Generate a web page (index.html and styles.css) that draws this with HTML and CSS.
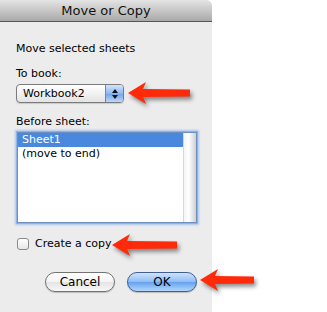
FILE: index.html
```html
<!DOCTYPE html>
<html lang="en">
<head>
    <meta charset="UTF-8">
    <title>Move or Copy</title>
    <link rel="stylesheet" href="styles.css">
</head>
<body>
    <div class="dialog">
        <div class="titlebar">Move or Copy</div>
        <div class="content">
            <p class="intro">Move selected sheets</p>

            <p class="label">To book:</p>
            <div class="popup">
                <span class="popup-text">Workbook2</span>
                <span class="stepper">
                    <svg width="8" height="12" viewBox="0 0 8 12">
                        <polygon points="4,1 7,5 1,5" fill="#111"/>
                        <polygon points="1,7 7,7 4,11" fill="#111"/>
                    </svg>
                </span>
            </div>

            <p class="label label-list">Before sheet:</p>
            <div class="listbox">
                <div class="rows">
                    <div class="row selected">Sheet1</div>
                    <div class="row">(move to end)</div>
                </div>
                <div class="scrolltrack"></div>
            </div>

            <label class="check-row">
                <span class="checkbox"></span>
                <span>Create a copy</span>
            </label>

            <div class="buttons">
                <button class="btn">Cancel</button>
                <button class="btn btn-default">OK</button>
            </div>
        </div>
    </div>

    <!-- red call-out arrows -->
    <svg class="arrow arrow-book" width="64" height="26" viewBox="0 0 64 26">
        <polygon points="0,13 18,2 15,9 62,9.5 62,16.5 15,17 18,24" fill="#ff2a0a"/>
    </svg>
    <svg class="arrow arrow-copy" width="67" height="26" viewBox="0 0 67 26">
        <polygon points="0,13 18,2 15,9 65,9.5 65,16.5 15,17 18,24" fill="#ff2a0a"/>
    </svg>
    <svg class="arrow arrow-ok" width="56" height="26" viewBox="0 0 56 26">
        <polygon points="0,13 18,2 15,9 54,9.5 54,16.5 15,17 18,24" fill="#ff2a0a"/>
    </svg>
</body>
</html>
```

FILE: styles.css
```css
/* Basic Reset */
* {
    margin: 0;
    padding: 0;
    box-sizing: border-box;
}

body {
    font-family: "DejaVu Sans", "Liberation Sans", sans-serif;
    font-size: 11px;
    color: #000;
    background-color: #fff;
    width: 327px;
    height: 312px;
    overflow: hidden;
    position: relative;
}

.dialog {
    width: 212px;
    height: 312px;
    background-color: #ececec;
    border-top-right-radius: 6px;
    overflow: hidden;
}

.titlebar {
    height: 22px;
    line-height: 21px;
    text-align: center;
    font-size: 13px;
    color: #111;
    background: linear-gradient(#e4e4e4, #a9a9a9);
    border-bottom: 1px solid #555;
}

.content {
    padding: 20px 0 0 16px;
}

.intro,
.label {
    line-height: 14px;
}

.label {
    margin-top: 11px;
}

.label-list {
    margin-top: 12px;
}

/* pop-up menu */
.popup {
    margin-top: 3px;
    width: 108px;
    height: 19px;
    display: flex;
    border: 1px solid #7b7b7b;
    border-radius: 4px;
    background: linear-gradient(#ffffff, #f1f1f1 50%, #e3e3e3);
    box-shadow: 0 1px 1px rgba(0, 0, 0, 0.15);
    overflow: hidden;
}

.popup-text {
    flex: 1;
    line-height: 17px;
    padding-left: 6px;
}

.stepper {
    width: 18px;
    display: flex;
    align-items: center;
    justify-content: center;
    border-left: 1px solid #6f87ad;
    background: linear-gradient(#d3e5fb, #8fb8ee 50%, #6fa3ea 51%, #bcd8fb);
}

/* list */
.listbox {
    margin-top: 3px;
    margin-left: 1px;
    width: 180px;
    height: 91px;
    display: flex;
    background-color: #fff;
    border: 1px solid #6d8fc2;
    box-shadow: 0 0 0 1px #8fb3e6, 0 0 2px 2px #a9c6ee;
}

.rows {
    flex: 1;
}

.row {
    height: 14px;
    line-height: 14px;
    padding-left: 4px;
}

.row.selected {
    background-color: #4a88dd;
    color: #fff;
}

.scrolltrack {
    width: 13px;
    background: linear-gradient(to right, #f4f4f4, #ffffff 40%, #cfcfcf);
    border-left: 1px solid #d8d8d8;
}

/* checkbox */
.check-row {
    margin-top: 14px;
    display: flex;
    align-items: center;
    gap: 6px;
    line-height: 14px;
}

.checkbox {
    width: 12px;
    height: 12px;
    margin-left: 1px;
    border: 1px solid #8a8a8a;
    border-radius: 3px;
    background: linear-gradient(#ffffff, #e6e6e6);
}

/* buttons */
.buttons {
    margin-top: 21px;
    margin-left: 29px;
    display: flex;
    gap: 12px;
}

.btn {
    width: 70px;
    height: 20px;
    font-family: inherit;
    font-size: 12px;
    color: #000;
    border: 1px solid #737373;
    border-radius: 10px;
    background: linear-gradient(#ffffff, #f4f4f4 50%, #e4e4e4 51%, #f7f7f7);
    box-shadow: 0 1px 1px rgba(0, 0, 0, 0.2);
}

.btn-default {
    border-color: #3e5f97;
    background: linear-gradient(#cfe3fb, #8dbcf4 50%, #64a2ee 51%, #b3d6fb);
}

/* call-out arrows over the screenshot */
.arrow {
    position: absolute;
    filter: drop-shadow(2px 3px 2px rgba(0, 0, 0, 0.45));
}

.arrow-book {
    left: 128px;
    top: 80px;
}

.arrow-copy {
    left: 112px;
    top: 232px;
}

.arrow-ok {
    left: 200px;
    top: 267px;
}
```
